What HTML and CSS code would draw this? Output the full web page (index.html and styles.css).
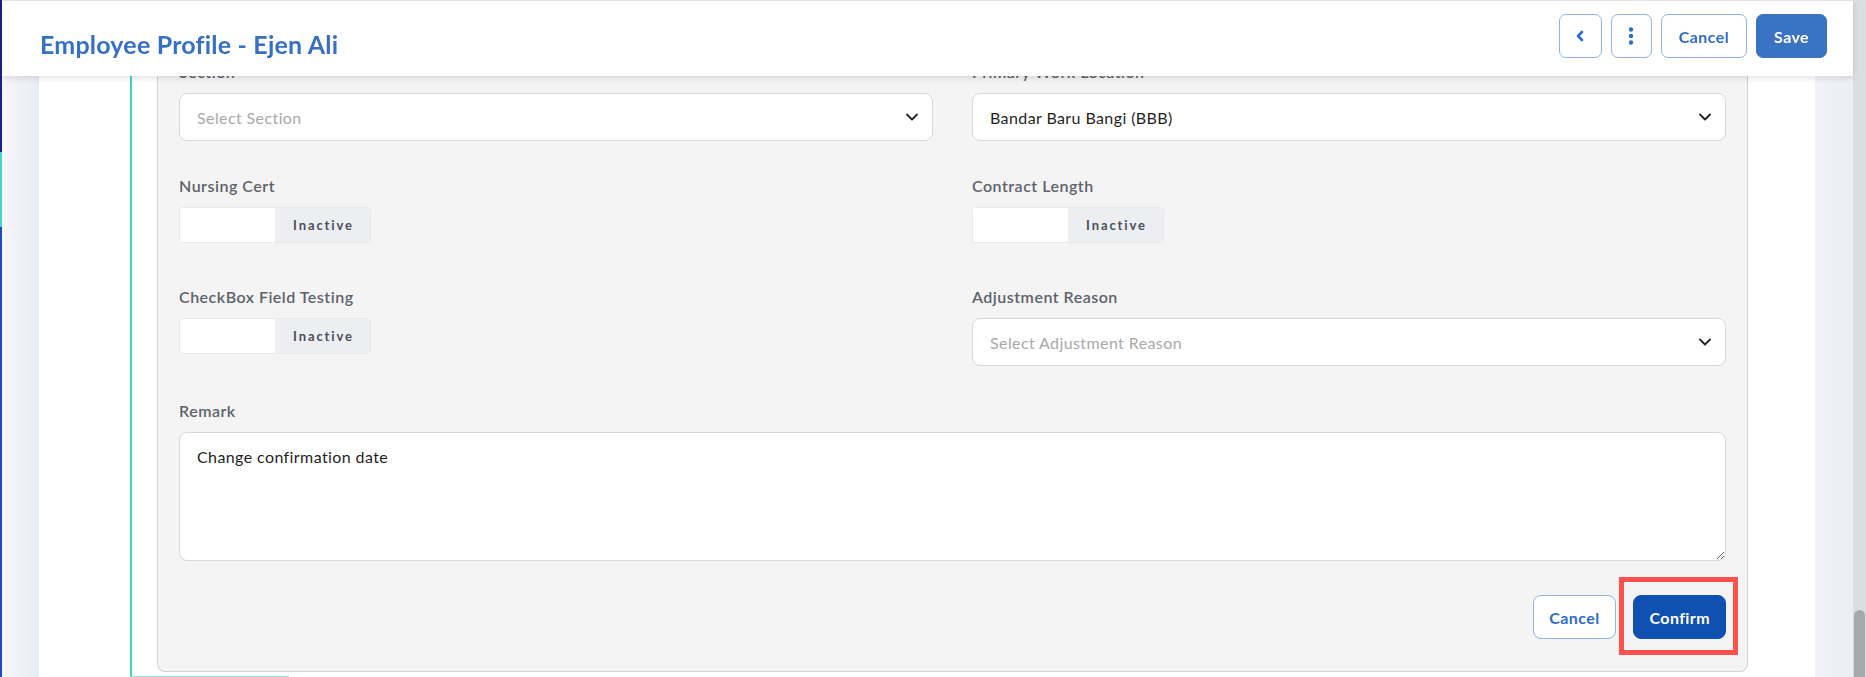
FILE: index.html
```
<!DOCTYPE html>
<html lang="en">
<head>
    <meta charset="UTF-8">
    <meta name="viewport" content="width=device-width, initial-scale=1.0">
    <title>Employee Profile - Ejen Ali</title>
    <link rel="stylesheet" href="styles.css">
</head>
<body>
    <div class="app">
        <div class="edge"></div>
        <div class="gutter gutter-left"></div>
        <main class="card">
            <div class="track">
                <section class="panel">
                    <div class="form-grid">
                        <div class="field">
                            <label class="label">Section</label>
                            <div class="select placeholder">
                                <span>Select Section</span>
                                <svg class="chevron" width="12" height="8" viewBox="0 0 12 8"><path d="M1 1.5l5 5 5-5" fill="none" stroke="#222" stroke-width="1.8" stroke-linecap="round" stroke-linejoin="round"/></svg>
                            </div>
                        </div>
                        <div class="field">
                            <label class="label">Primary Work Location</label>
                            <div class="select">
                                <span>Bandar Baru Bangi (BBB)</span>
                                <svg class="chevron" width="12" height="8" viewBox="0 0 12 8"><path d="M1 1.5l5 5 5-5" fill="none" stroke="#222" stroke-width="1.8" stroke-linecap="round" stroke-linejoin="round"/></svg>
                            </div>
                        </div>

                        <div class="field">
                            <label class="label">Nursing Cert</label>
                            <div class="switch">
                                <span class="switch-on"></span>
                                <span class="switch-off">Inactive</span>
                            </div>
                        </div>
                        <div class="field">
                            <label class="label">Contract Length</label>
                            <div class="switch">
                                <span class="switch-on"></span>
                                <span class="switch-off">Inactive</span>
                            </div>
                        </div>

                        <div class="field">
                            <label class="label">CheckBox Field Testing</label>
                            <div class="switch">
                                <span class="switch-on"></span>
                                <span class="switch-off">Inactive</span>
                            </div>
                        </div>
                        <div class="field">
                            <label class="label">Adjustment Reason</label>
                            <div class="select placeholder">
                                <span>Select Adjustment Reason</span>
                                <svg class="chevron" width="12" height="8" viewBox="0 0 12 8"><path d="M1 1.5l5 5 5-5" fill="none" stroke="#222" stroke-width="1.8" stroke-linecap="round" stroke-linejoin="round"/></svg>
                            </div>
                        </div>

                        <div class="field field-wide">
                            <label class="label">Remark</label>
                            <textarea class="textarea">Change confirmation date</textarea>
                        </div>
                    </div>
                    <div class="actions">
                        <button class="btn btn-outline">Cancel</button>
                        <button class="btn btn-confirm">Confirm</button>
                    </div>
                </section>
                <div class="track-end"></div>
            </div>
        </main>
        <div class="gutter gutter-right"></div>
        <div class="scrollbar"><div class="thumb"></div></div>
    </div>

    <header class="topbar">
        <h1 class="title">Employee Profile - Ejen Ali</h1>
        <div class="head-actions">
            <button class="btn btn-outline btn-icon">
                <svg width="10" height="12" viewBox="0 0 10 12"><path d="M7 2L3 6l4 4" fill="none" stroke="#2f6cc6" stroke-width="2.6" stroke-linecap="round" stroke-linejoin="round"/></svg>
            </button>
            <button class="btn btn-outline btn-icon btn-kebab">
                <svg width="6" height="18" viewBox="0 0 6 18"><circle cx="3" cy="2.5" r="2.2" fill="#2f6cc6"/><circle cx="3" cy="9" r="2.2" fill="#2f6cc6"/><circle cx="3" cy="15.5" r="2.2" fill="#2f6cc6"/></svg>
            </button>
            <button class="btn btn-outline">Cancel</button>
            <button class="btn btn-save">Save</button>
        </div>
    </header>
</body>
</html>
```

FILE: styles.css
```
* {
    box-sizing: border-box;
}
body {
    margin: 0;
    height: 677px;
    overflow: hidden;
    font-family: 'Lato', 'Noto Sans', sans-serif;
    color: #222;
    background: #eef0f6;
}
.app {
    display: flex;
    height: 677px;
}
.edge {
    width: 2px;
    flex-shrink: 0;
    background: linear-gradient(#1d1f86 0, #1d1f86 152px, #3fd8c9 152px, #3fd8c9 227px, #2149c6 227px);
}
.gutter {
    flex-shrink: 0;
}
.gutter-left {
    width: 37px;
    background: linear-gradient(to right, #f6f7fb, #e8ebf3);
}
.gutter-right {
    width: 38px;
    background: linear-gradient(to right, #f0f2f8, #eceef4);
}
.card {
    flex: 1;
    background: #ffffff;
    padding-left: 91px;
    padding-right: 67px;
}
.track {
    border-left: 2px solid #3fd6c7;
    padding-left: 25px;
    display: flex;
    flex-direction: column;
}
.track-end {
    flex-shrink: 0;
    width: 159px;
    height: 2px;
    margin-left: -27px;
    margin-top: 4px;
    background: #8fe4dc;
}

/* form panel */
.panel {
    flex-shrink: 0;
    background: #f4f4f4;
    border: 1px solid #d2d2d2;
    border-top: none;
    border-radius: 0 0 8px 8px;
    padding: 61px 21px 32px 21px;
    box-shadow: 0 1px 0 #ffffff;
}
.form-grid {
    display: grid;
    grid-template-columns: 1fr 1fr;
    column-gap: 39px;
    row-gap: 34px;
}
.field-wide {
    grid-column: 1 / 3;
}
.label {
    display: block;
    font-size: 16px;
    line-height: 22px;
    font-weight: 600;
    letter-spacing: 0.5px;
    color: #5d636a;
    margin-bottom: 10px;
}
.select {
    height: 48px;
    background: #ffffff;
    border: 1px solid #d3d9df;
    border-radius: 8px;
    display: flex;
    align-items: center;
    justify-content: space-between;
    padding: 0 14px 0 17px;
    font-size: 16px;
    letter-spacing: 0.4px;
    color: #1f1f1f;
}
.select.placeholder {
    color: #a9a9a9;
}
.chevron {
    display: block;
}
.switch {
    display: flex;
    width: 192px;
    height: 36px;
    border: 1px solid #e9e9ec;
    border-radius: 4px;
    overflow: hidden;
    margin-bottom: 9px;
    background: #fff;
}
.switch-on {
    width: 95px;
    background: #ffffff;
}
.switch-off {
    width: 95px;
    background: #eceef2;
    display: flex;
    align-items: center;
    justify-content: center;
    font-size: 13px;
    font-weight: 700;
    letter-spacing: 1.9px;
    color: #4a4f57;
    padding-left: 2px;
}
.textarea {
    display: block;
    width: 100%;
    height: 129px;
    border: 1px solid #d3d9df;
    border-radius: 8px;
    padding: 14px 17px;
    font-family: inherit;
    font-size: 16px;
    line-height: 20px;
    letter-spacing: 0.4px;
    color: #1f1f1f;
    background: #ffffff;
    resize: vertical;
}
.actions {
    display: flex;
    justify-content: flex-end;
    gap: 17px;
    margin-top: 34px;
}

/* buttons */
.btn {
    height: 44px;
    padding: 0 15px;
    border-radius: 8px;
    font-family: inherit;
    font-size: 16px;
    font-weight: 700;
    letter-spacing: 0.4px;
    cursor: pointer;
    display: inline-flex;
    align-items: center;
    justify-content: center;
}
.btn-outline {
    background: #ffffff;
    border: 1px solid #91b2e7;
    color: #2f6cc6;
}
.btn-save {
    background: #3a72c4;
    border: 1px solid #3a72c4;
    color: #ffffff;
}
.btn-confirm {
    position: relative;
    background: #0f50b0;
    border: 1px solid #0f50b0;
    color: #ffffff;
    padding: 0 15px 0 16px;
}
/* red highlight drawn round the confirm button */
.btn-confirm::after {
    content: '';
    position: absolute;
    top: -19px;
    bottom: -17px;
    left: -15px;
    right: -13px;
    border: 5px solid #ff4f4f;
}
.btn-icon {
    width: 43px;
    padding: 0;
}
.btn-kebab {
    width: 41px;
}

/* top bar */
.topbar {
    position: fixed;
    top: 0;
    left: 2px;
    right: 13px;
    height: 76px;
    background: #ffffff;
    border-top: 1px solid #e2e2e2;
    box-shadow: 0 2px 6px rgba(0, 0, 0, 0.12);
    display: flex;
    align-items: center;
    justify-content: space-between;
    padding: 0 26px 0 38px;
    z-index: 10;
}
.title {
    margin: 10px 0 0 0;
    font-size: 25px;
    font-weight: 700;
    letter-spacing: 0.2px;
    color: #3670c4;
}
.head-actions {
    display: flex;
    gap: 9px;
    margin-bottom: 5px;
}
.head-actions .btn {
    border-radius: 7px;
    padding: 0 17px;
}
.head-actions .btn-icon {
    padding: 0;
}

.scrollbar {
    width: 13px;
    flex-shrink: 0;
    background: #dcdde1;
    display: flex;
    flex-direction: column;
    justify-content: flex-end;
}
.thumb {
    height: 67px;
    margin: 0 1px 0 1px;
    background: #a7a8aa;
    border-radius: 6px 6px 0 0;
}
```
